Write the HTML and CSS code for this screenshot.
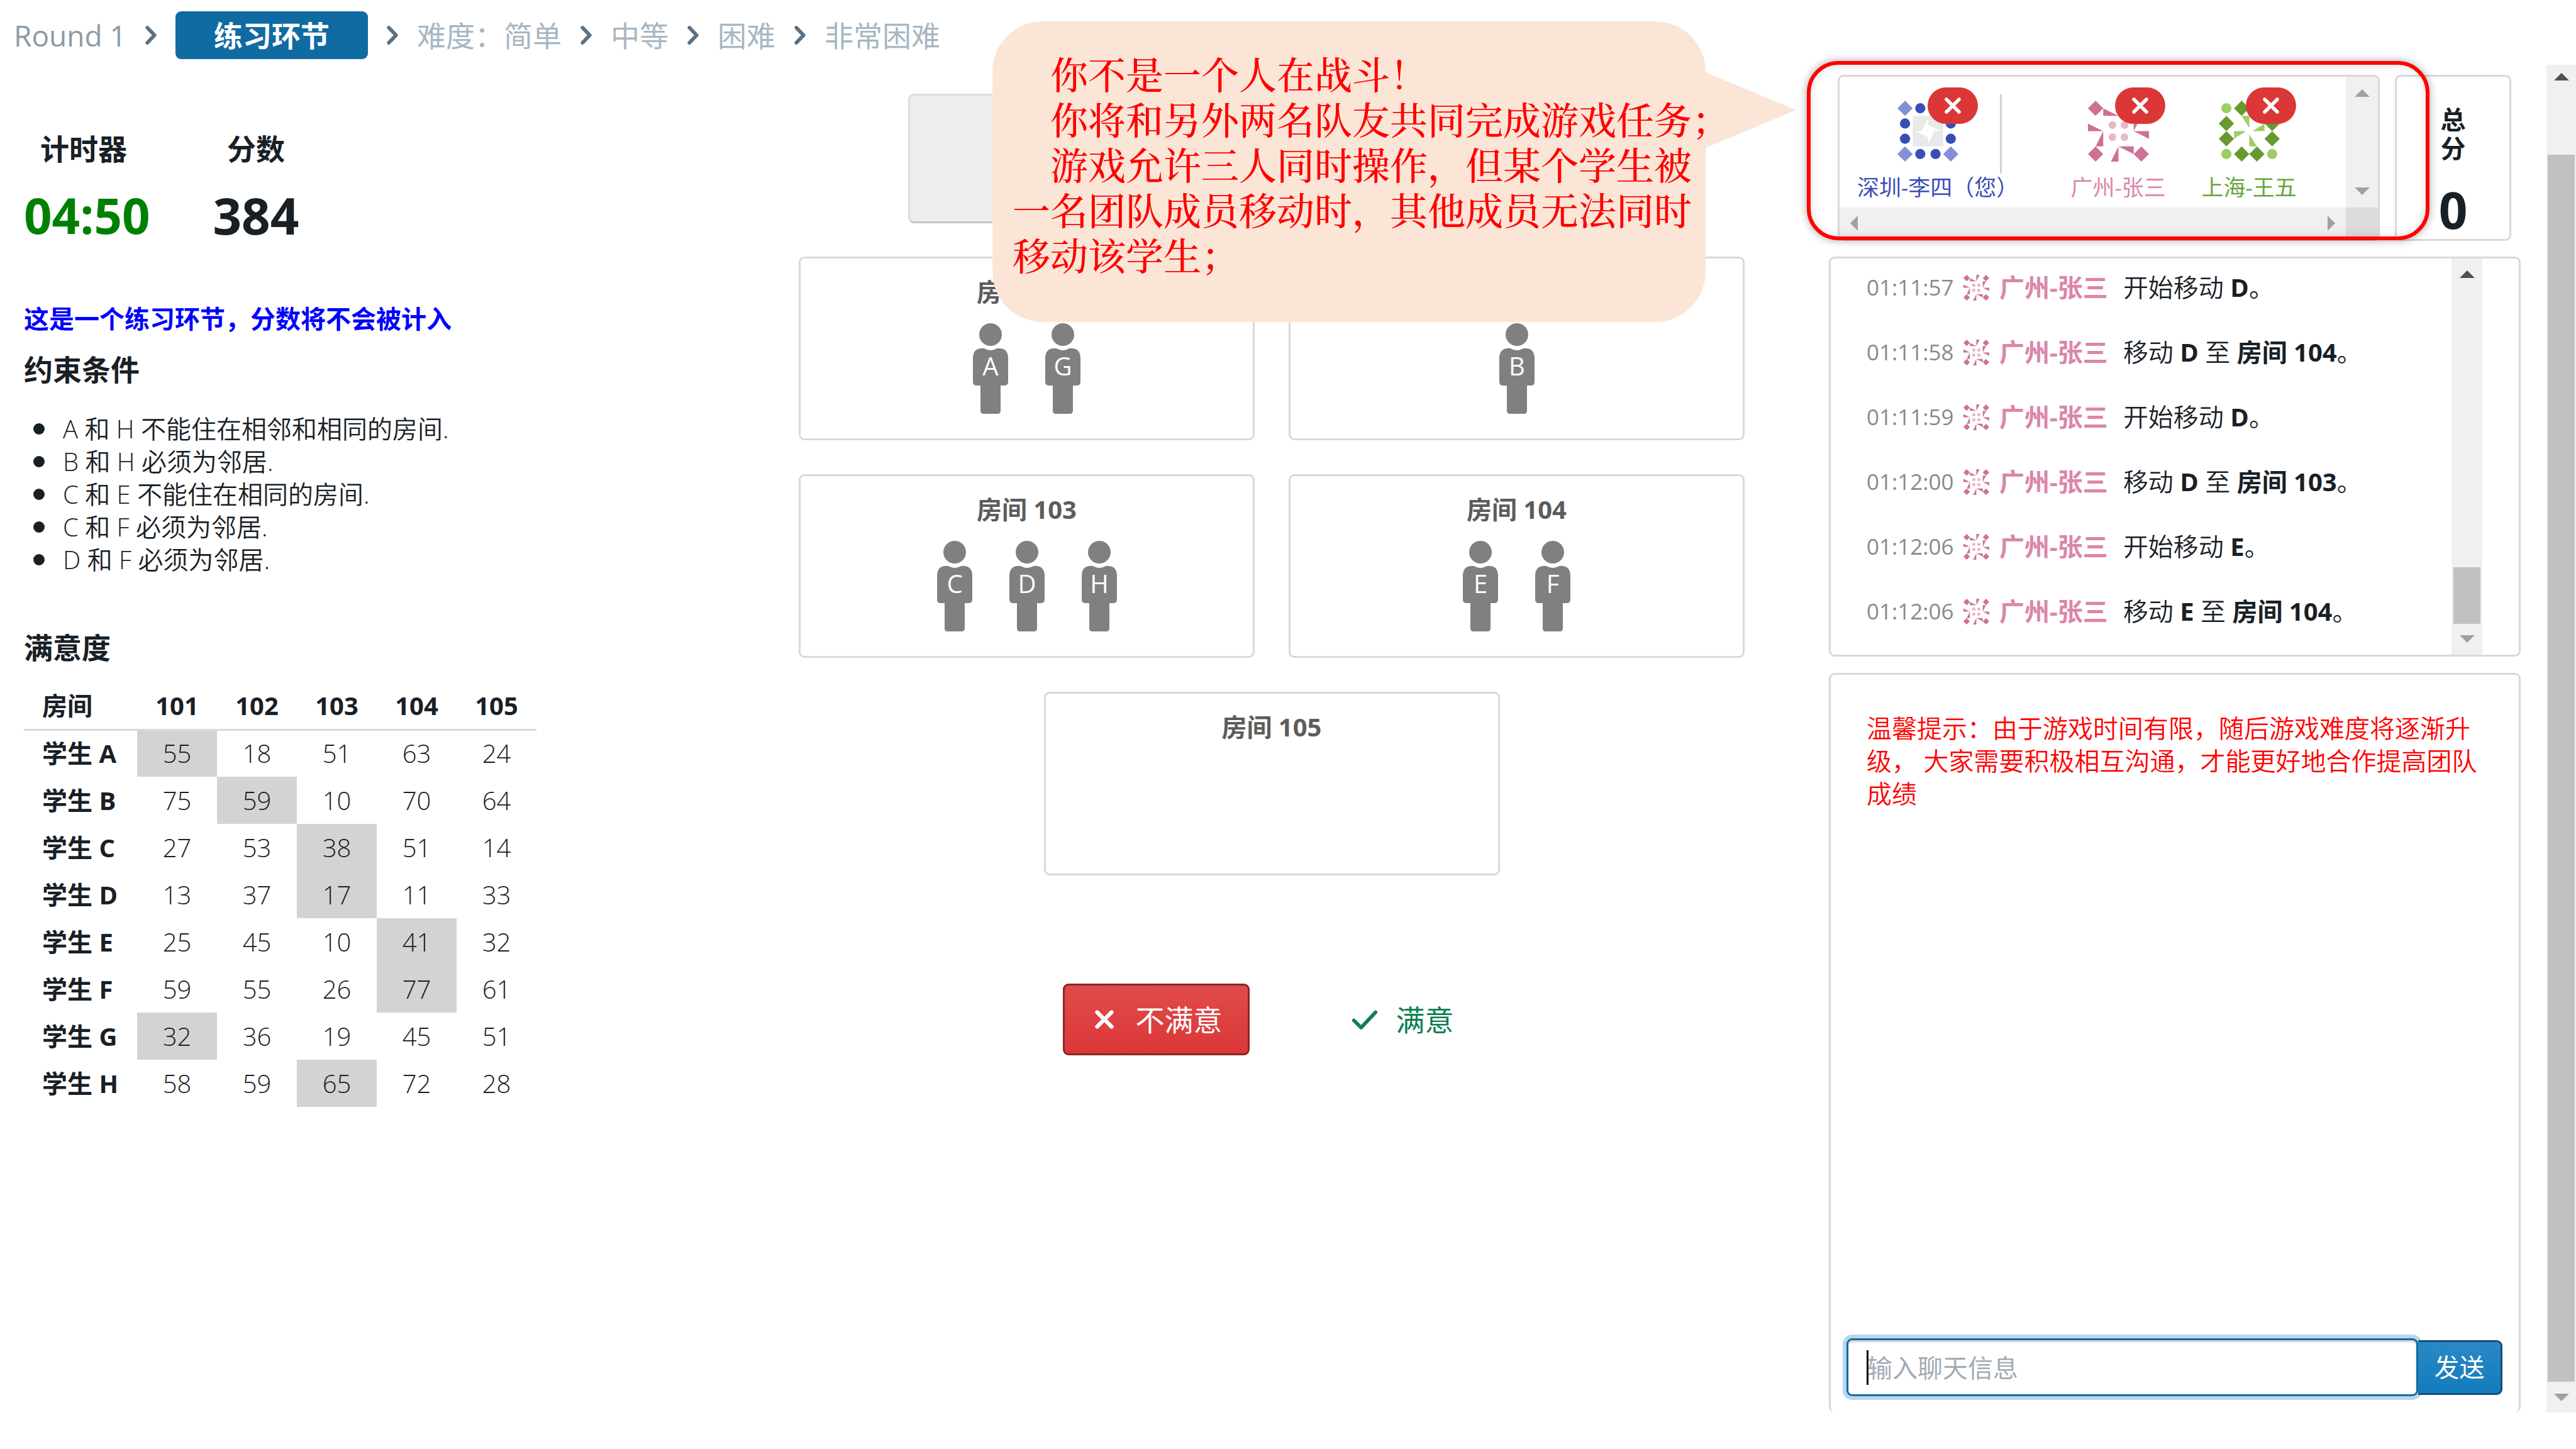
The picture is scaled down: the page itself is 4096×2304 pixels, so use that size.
FILE: index.html
```html
<!DOCTYPE html>
<html lang="zh-CN">
<head>
<meta charset="utf-8">
<title>练习环节</title>
<link rel="stylesheet" href="styles.css">
</head>
<body>
<svg class="defs" aria-hidden="true">
  <symbol id="chevron" viewBox="0 0 16 16"><path d="M6 3.800l4 4.200-4 4.200" fill="none" stroke="#5c7080" stroke-width="2" stroke-linecap="round" stroke-linejoin="round"/></symbol>
  <symbol id="cross" viewBox="0 0 16 16"><path d="M4 4l8 8M12 4l-8 8" fill="none" stroke="currentColor" stroke-width="2.200" stroke-linecap="round"/></symbol>
  <symbol id="tick" viewBox="0 0 16 16"><path d="M2 8.500l4 4 8-8.500" fill="none" stroke="currentColor" stroke-width="2" stroke-linecap="round" stroke-linejoin="round"/></symbol>
  <symbol id="person" viewBox="0 0 56 144">
    <circle cx="28" cy="18" r="18"/>
    <path d="M12 40q5-1 8 1q8 4 16 0q3-2 8-1q11 1 12 14v39q0 6-6 6h-6v40q0 5-5 5H17q-5 0-5-5V99H6q-6 0-6-6V54Q1 41 12 40z"/>
  </symbol>
  <symbol id="avatar-li" viewBox="0 0 96 96">
    <path fill="#8490d6" d="M12 0l12 12-12 12L0 12zM84 0l12 12-12 12-12-12zM12 72l12 12-12 12L0 84zM84 72l12 12-12 12-12-12z"/>
    <g fill="#3a4db5"><circle cx="36" cy="12" r="8"/><circle cx="60" cy="12" r="8"/><circle cx="12" cy="36" r="8"/><circle cx="12" cy="60" r="8"/><circle cx="84" cy="36" r="8"/><circle cx="84" cy="60" r="8"/><circle cx="36" cy="84" r="8"/><circle cx="60" cy="84" r="8"/></g>
    <path fill="#e9e9e9" d="M24 24h48v48H24z"/>
    <path fill="#fff" d="M47.700 28.400L48.300 38 67.500 47.500 58 48.200 48.800 67.800 48.300 58 29.200 48.600 38.400 47.400z"/>
  </symbol>
  <symbol id="avatar-zhang" viewBox="0 0 96 96">
    <path fill="#cf7096" d="M12 0l12 12-12 12L0 12zM84 0l12 12-12 12-12-12zM12 72l12 12-12 12L0 84zM84 72l12 12-12 12-12-12zM24 12v12h24zM48 24V0h12zM0 36v12h24zM24 48v24H12zM48 72v24H36zM48 72h24v12zM72 48h24v12zM72 48V24h12z"/>
    <g fill="#e5b8cc"><circle cx="38.500" cy="38.500" r="6"/><circle cx="57.500" cy="38.500" r="6"/><circle cx="38.500" cy="57.500" r="6"/><circle cx="57.500" cy="57.500" r="6"/></g>
  </symbol>
  <symbol id="avatar-wang" viewBox="0 0 96 96">
    <g fill="#9bcf66"><circle cx="12" cy="12" r="8"/><circle cx="84" cy="12" r="8"/><circle cx="12" cy="84" r="8"/><circle cx="84" cy="84" r="8"/>
    <path d="M36 24h12v19zM72 36v12H53zM24 48h19L24 60zM48 53v19h12z"/></g>
    <path fill="#68992e" d="M36 0l12 12-12 12-12-12zM60 0l12 12-12 12-12-12zM12 24l12 12-12 12L0 36zM12 48l12 12-12 12L0 60zM84 24l12 12-12 12-12-12zM84 48l12 12-12 12-12-12zM36 72l12 12-12 12-12-12zM60 72l12 12-12 12-12-12z"/>
  </symbol>
  <symbol id="arrow-up" viewBox="0 0 24 12"><path d="M0 12L12 0l12 12z" fill="currentColor"/></symbol>
  <symbol id="arrow-down" viewBox="0 0 24 12"><path d="M0 0l12 12L24 0z" fill="currentColor"/></symbol>
  <symbol id="arrow-left" viewBox="0 0 12 24"><path d="M12 0L0 12l12 12z" fill="currentColor"/></symbol>
  <symbol id="arrow-right" viewBox="0 0 12 24"><path d="M0 0l12 12L0 24z" fill="currentColor"/></symbol>
</svg>

<nav class="steps">
  <span class="step step-round">Round 1</span>
  <svg class="icon"><use href="#chevron"/></svg>
  <span class="step step-active">练习环节</span>
  <svg class="icon"><use href="#chevron"/></svg>
  <span class="step">难度：简单</span>
  <svg class="icon"><use href="#chevron"/></svg>
  <span class="step">中等</span>
  <svg class="icon"><use href="#chevron"/></svg>
  <span class="step">困难</span>
  <svg class="icon"><use href="#chevron"/></svg>
  <span class="step">非常困难</span>
</nav>

<div class="view">
  <main class="workspace">
    <section class="info">
      <div class="stats">
        <div class="stat"><h2>计时器</h2><div class="figure timer">04:50</div></div>
        <div class="stat"><h2>分数</h2><div class="figure">384</div></div>
      </div>
      <p class="practice">这是一个练习环节，分数将不会被计入</p>
      <h2>约束条件</h2>
      <ul class="rules">
        <li>A 和 H 不能住在相邻和相同的房间.</li>
        <li>B 和 H 必须为邻居.</li>
        <li>C 和 E 不能住在相同的房间.</li>
        <li>C 和 F 必须为邻居.</li>
        <li>D 和 F 必须为邻居.</li>
      </ul>
      <h2>满意度</h2>
      <table class="scores">
        <thead><tr><th scope="col">房间</th><th scope="col">101</th><th scope="col">102</th><th scope="col">103</th><th scope="col">104</th><th scope="col">105</th></tr></thead>
        <tbody>
          <tr><th scope="row">学生 A</th><td class="on">55</td><td>18</td><td>51</td><td>63</td><td>24</td></tr>
          <tr><th scope="row">学生 B</th><td>75</td><td class="on">59</td><td>10</td><td>70</td><td>64</td></tr>
          <tr><th scope="row">学生 C</th><td>27</td><td>53</td><td class="on">38</td><td>51</td><td>14</td></tr>
          <tr><th scope="row">学生 D</th><td>13</td><td>37</td><td class="on">17</td><td>11</td><td>33</td></tr>
          <tr><th scope="row">学生 E</th><td>25</td><td>45</td><td>10</td><td class="on">41</td><td>32</td></tr>
          <tr><th scope="row">学生 F</th><td>59</td><td>55</td><td>26</td><td class="on">77</td><td>61</td></tr>
          <tr><th scope="row">学生 G</th><td class="on">32</td><td>36</td><td>19</td><td>45</td><td>51</td></tr>
          <tr><th scope="row">学生 H</th><td>58</td><td>59</td><td class="on">65</td><td>72</td><td>28</td></tr>
        </tbody>
      </table>
    </section>

    <section class="board">
      <div class="waiting"></div>
      <div class="rooms">
        <div class="room"><h3>房间 101</h3><div class="people">
          <svg class="person" viewBox="0 0 56 144"><use href="#person"/><text x="28" y="83">A</text></svg>
          <svg class="person" viewBox="0 0 56 144"><use href="#person"/><text x="28" y="83">G</text></svg>
        </div></div>
        <div class="room"><h3>房间 102</h3><div class="people">
          <svg class="person" viewBox="0 0 56 144"><use href="#person"/><text x="28" y="83">B</text></svg>
        </div></div>
        <div class="room"><h3>房间 103</h3><div class="people">
          <svg class="person" viewBox="0 0 56 144"><use href="#person"/><text x="28" y="83">C</text></svg>
          <svg class="person" viewBox="0 0 56 144"><use href="#person"/><text x="28" y="83">D</text></svg>
          <svg class="person" viewBox="0 0 56 144"><use href="#person"/><text x="28" y="83">H</text></svg>
        </div></div>
        <div class="room"><h3>房间 104</h3><div class="people">
          <svg class="person" viewBox="0 0 56 144"><use href="#person"/><text x="28" y="83">E</text></svg>
          <svg class="person" viewBox="0 0 56 144"><use href="#person"/><text x="28" y="83">F</text></svg>
        </div></div>
        <div class="room"><h3>房间 105</h3></div>
      </div>
      <div class="actions">
        <button class="action reject" type="button"><svg class="icon"><use href="#cross"/></svg>不满意</button>
        <button class="action accept" type="button"><svg class="icon"><use href="#tick"/></svg>满意</button>
      </div>
      <div class="bubble">
        <p>你不是一个人在战斗！</p>
        <p>你将和另外两名队友共同完成游戏任务；</p>
        <p>游戏允许三人同时操作，但某个学生被<br>一名团队成员移动时，其他成员无法同时<br>移动该学生；</p>
        <svg class="bubble-tail" viewBox="0 0 144 120"><path d="M0 0l144 60L0 120z" fill="#fbe5d6"/></svg>
      </div>
    </section>

    <aside class="side">
      <div class="top">
        <div class="team">
          <div class="team-body">
            <div class="players">
              <div class="player me"><div class="avatar"><svg viewBox="0 0 96 96"><use href="#avatar-li"/></svg><span class="badge"><svg class="badge-icon"><use href="#cross"/></svg></span></div><span class="name blue">深圳-李四（您）</span></div>
              <div class="divider"></div>
              <div class="player"><div class="avatar"><svg viewBox="0 0 96 96"><use href="#avatar-zhang"/></svg><span class="badge"><svg class="badge-icon"><use href="#cross"/></svg></span></div><span class="name pink">广州-张三</span></div>
              <div class="player"><div class="avatar"><svg viewBox="0 0 96 96"><use href="#avatar-wang"/></svg><span class="badge"><svg class="badge-icon"><use href="#cross"/></svg></span></div><span class="name green">上海-王五</span></div>
            </div>
            <div class="bar bar-y"><svg class="tri"><use href="#arrow-up"/></svg><svg class="tri"><use href="#arrow-down"/></svg></div>
            <div class="bar bar-x"><svg class="tri-x"><use href="#arrow-left"/></svg><svg class="tri-x"><use href="#arrow-right"/></svg></div>
            <div class="corner"></div>
          </div>
          <div class="highlight"></div>
        </div>
        <div class="total"><h2>总<br>分</h2><div class="figure">0</div></div>
      </div>

      <div class="log">
        <ul class="events">
          <li><time>01:11:57</time><svg class="mini"><use href="#avatar-zhang"/></svg><b class="pink">广州-张三</b><span>开始移动 <b>D</b>。</span></li>
          <li><time>01:11:58</time><svg class="mini"><use href="#avatar-zhang"/></svg><b class="pink">广州-张三</b><span>移动 <b>D</b> 至 <b>房间 104</b>。</span></li>
          <li><time>01:11:59</time><svg class="mini"><use href="#avatar-zhang"/></svg><b class="pink">广州-张三</b><span>开始移动 <b>D</b>。</span></li>
          <li><time>01:12:00</time><svg class="mini"><use href="#avatar-zhang"/></svg><b class="pink">广州-张三</b><span>移动 <b>D</b> 至 <b>房间 103</b>。</span></li>
          <li><time>01:12:06</time><svg class="mini"><use href="#avatar-zhang"/></svg><b class="pink">广州-张三</b><span>开始移动 <b>E</b>。</span></li>
          <li><time>01:12:06</time><svg class="mini"><use href="#avatar-zhang"/></svg><b class="pink">广州-张三</b><span>移动 <b>E</b> 至 <b>房间 104</b>。</span></li>
        </ul>
        <div class="bar log-bar"><svg class="tri dark"><use href="#arrow-up"/></svg><div class="thumb"></div><svg class="tri"><use href="#arrow-down"/></svg></div>
      </div>

      <div class="chat">
        <p class="tip">温馨提示：由于游戏时间有限，随后游戏难度将逐渐升级， 大家需要积极相互沟通，才能更好地合作提高团队成绩</p>
        <form class="composer">
          <input class="message" type="text" placeholder="输入聊天信息" aria-label="输入聊天信息">
          <button class="send" type="button">发送</button>
        </form>
      </div>
    </aside>
  </main>
  <div class="bar page-bar"><svg class="tri dark"><use href="#arrow-up"/></svg><div class="thumb"></div><svg class="tri"><use href="#arrow-down"/></svg></div>
</div>
</body>
</html>
```
FILE: styles.css
```css
* { box-sizing: border-box; }
body {
  margin: 0;
  height: 100vh;
  display: flex;
  flex-direction: column;
  padding-bottom: 58px;
  overflow: hidden;
  background: #fff;
  color: #182026;
  font-family: "Open Sans", "Noto Sans CJK SC", sans-serif;
  font-size: 40px;
  line-height: 52px;
}
h2, h3, p, ul { margin: 0; padding: 0; }
h2 { font-size: 46px; line-height: 60px; font-weight: 700; }
h3 { font-size: 40px; line-height: 52px; font-weight: 700; color: #5c5c5c; text-align: center; }
b { font-weight: 700; }
ul { list-style: none; }
button, input { font: inherit; }
.defs { position: absolute; width: 0; height: 0; }
.icon { width: 46px; height: 46px; flex: none; }

/* Step trail */
.steps {
  display: flex;
  align-items: center;
  gap: 16px;
  height: 103px;
  flex: none;
  padding: 9px 22px 0;
  font-size: 46px;
  line-height: 76px;
  color: #a7b6c2;
}
.step-round { color: #8a9ba8; }
.step-active {
  width: 306px;
  text-align: center;
  background: #106ba3;
  color: #fff;
  font-weight: 700;
  border-radius: 9px;
}

.view { flex: 1; min-height: 0; display: flex; }
.workspace {
  flex: 1;
  min-width: 0;
  display: grid;
  grid-template-columns: 1232fr 1638fr 1100fr;
  padding: 0 41px 0 38px;
}

/* Left column */
.info { padding-top: 103px; }
.stats { display: flex; gap: 110px; margin-bottom: 83px; }
.stat { display: flex; flex-direction: column; align-items: center; gap: 20px; width: 138px; }
.stat:first-child { width: 190px; }
.stat:first-child .figure { align-self: flex-start; }
.figure { font-size: 80px; line-height: 112px; font-weight: 700; }
.timer { font-size: 78px; color: #008000; }
.practice { color: #00f; font-weight: 700; margin-bottom: 24px; }
.rules { margin: 39px 0 83px; font-weight: 350; }
.rules li { display: flex; align-items: center; gap: 29px; padding-left: 15px; }
.rules li::before { content: ""; width: 18px; height: 18px; border-radius: 50%; background: #182026; }
.scores { margin-top: 26px; border-collapse: collapse; table-layout: fixed; width: 815px; font-weight: 350; }
.scores th, .scores td { height: 75px; padding: 0; text-align: center; width: 127px; }
.scores th { font-weight: 700; }
.scores th:first-child { width: 180px; text-align: left; padding-left: 29px; }
.scores thead th { border-bottom: 3px solid #d9d9d9; }
.scores .on { background: #d3d3d3; }

/* Centre column */
.board { position: relative; padding: 46px 134px 0 0; }
.waiting {
  height: 206px;
  margin: 0 174px 53px;
  background: #ededed;
  border: 3px solid #dcdcdc;
  border-bottom-color: #c4c4c4;
  border-radius: 9px;
}
.rooms { display: flex; flex-wrap: wrap; justify-content: center; gap: 54px; }
.room {
  width: calc(50% - 27px);
  height: 292px;
  padding-top: 27px;
  border: 3px solid #d9d9d9;
  border-radius: 9px;
}
.people { display: flex; justify-content: center; gap: 59px; margin-top: 24px; }
.person { width: 56px; height: 144px; fill: #808080; }
.person text { fill: #fff; font-size: 40px; text-anchor: middle; }
.actions { display: flex; justify-content: center; gap: 117px; margin-top: 172px; }
.action {
  display: flex;
  align-items: center;
  gap: 27px;
  height: 114px;
  padding: 0 40px;
  border: 3px solid transparent;
  border-radius: 9px;
  background: none;
  font-size: 46px;
}
.reject { color: #fff; background: linear-gradient(#e14b4b, #db3737); border-color: #8a2626; }
.accept { color: #0d8050; }

.bubble {
  position: absolute;
  z-index: 2;
  left: 308px;
  top: -69px;
  width: 1134px;
  height: 478px;
  padding: 46px 32px 0;
  border-radius: 80px;
  background: #fbe5d6;
  color: #f00;
  font-family: "Noto Serif CJK SC", "Noto Serif SC", "SimSun", "Noto Sans CJK SC", serif;
  font-size: 60px;
  font-weight: 500;
  line-height: 72px;
  white-space: nowrap;
}
.bubble p { text-indent: 60px; }
.bubble-tail { position: absolute; left: 100%; top: 81px; width: 144px; height: 120px; }

/* Right column */
.side { display: flex; flex-direction: column; padding-top: 16px; min-width: 0; }
.top { display: flex; gap: 24px; height: 264px; padding: 0 15px 0 14px; margin-bottom: 25px; }
.team { position: relative; flex: 1; min-width: 0; }
.team-body {
  height: 100%;
  display: grid;
  grid-template-columns: 1fr 51px;
  grid-template-rows: 1fr 50px;
  border: 3px solid #d9d9d9;
  border-radius: 9px;
  overflow: hidden;
}
.players { display: flex; padding: 28px 0 0 28px; }
.player { width: 150px; margin-right: 58px; display: flex; flex-direction: column; align-items: center; }
.me { width: 224px; margin-right: 3px; }
.me .name { align-self: flex-start; }
.avatar { position: relative; width: 97px; height: 97px; margin: 10px 0 15px; }
.avatar svg { display: block; width: 100%; height: 100%; }
.badge {
  position: absolute;
  left: 43px;
  top: -21px;
  display: flex;
  align-items: center;
  justify-content: center;
  width: 80px;
  height: 58px;
  border-radius: 29px;
  background: #db3737;
  color: #fff;
}
.me .badge { left: 48px; }
.avatar .badge-icon { width: 40px; height: 40px; }
.name { font-size: 35px; line-height: 52px; white-space: nowrap; }
.blue { color: #3a4db5; }
.pink { color: #db86a9; }
.green { color: #68a53a; }
.divider { width: 3px; height: 126px; margin-right: 110px; background: #d3d3d3; }
.highlight {
  position: absolute;
  z-index: 3;
  inset: -22px -79px 1px -49px;
  border: 6px solid #f00;
  border-radius: 50px;
  box-shadow: 0 0 14px rgba(0, 0, 0, 0.35), inset 0 0 14px rgba(0, 0, 0, 0.15);
}
.total {
  width: 185px;
  border: 3px solid #d9d9d9;
  border-radius: 9px;
  padding-top: 45px;
  text-align: center;
}
.total h2 { font-size: 40px; line-height: 46px; }
.total .figure { margin-top: 18px; }

/* Scrollbars */
.bar { display: flex; justify-content: space-between; align-items: center; background: #f0f0f0; color: #a0a0a0; }
.tri { width: 24px; height: 12px; flex: none; }
.tri-x { width: 12px; height: 24px; flex: none; }
.dark { color: #505050; }
.bar-y { flex-direction: column; padding: 20px 0; }
.bar-x { padding: 0 17px; }
.corner { background: #dcdcdc; }
.log-bar, .page-bar { flex-direction: column; }
.thumb { background: #c1c1c1; }
.log-bar { width: 49px; padding: 19px 0; }
.log-bar .thumb { width: 43px; height: 90px; margin-top: auto; margin-bottom: 18px; }
.page-bar { width: 47px; padding: 13px 0 18px; }
.page-bar .thumb { width: 43px; flex: 1; margin: 118px 0 19px; }

/* Event log */
.log, .chat { border: 3px solid #d9d9d9; border-radius: 9px; }
.log { display: flex; justify-content: space-between; height: 636px; padding-right: 58px; margin-bottom: 26px; flex: none; }
.events { padding: 20px 0 0 57px; font-weight: 350; }
.events li { display: flex; align-items: center; margin-bottom: 51px; white-space: nowrap; }
.events time { width: 154px; font-size: 35px; font-weight: 400; color: #8a8a8a; }
.mini { width: 41px; height: 41px; margin-right: 16px; }
.events .pink { margin-right: 24px; }

/* Chat */
.chat {
  flex: 1;
  display: flex;
  flex-direction: column;
  justify-content: space-between;
  border-bottom: 0;
  padding: 59px 26px 26px 25px;
}
.tip { color: #f00; font-weight: 350; padding: 0 28px 0 32px; }
.composer { display: flex; align-items: center; }
.message {
  flex: 1;
  min-width: 0;
  height: 92px;
  padding: 0 30px;
  border: 3px solid #106ba3;
  border-radius: 9px;
  outline: 0;
  color: #182026;
  background: linear-gradient(#000, #000) 29px 50% / 3px 55px no-repeat #fff;
  box-shadow: 0 0 0 6px rgba(19, 124, 189, 0.3), inset 0 3px 3px rgba(16, 22, 26, 0.2);
}
.message::placeholder { color: #a0abb5; opacity: 1; }
.send {
  width: 134px;
  height: 87px;
  padding: 0;
  border: 3px solid #0f4f7a;
  border-left: 0;
  border-radius: 0 9px 9px 0;
  background: linear-gradient(#2b88c4, #137cbd);
  color: #fff;
}
```
